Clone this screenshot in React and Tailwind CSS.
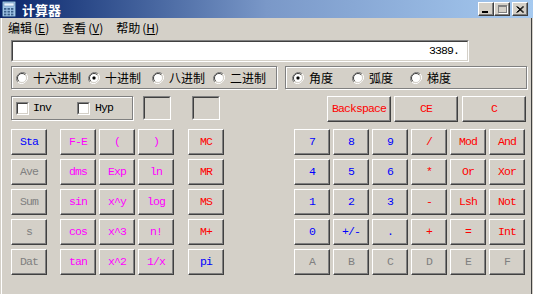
import React from "react";

const MONO = "font-['Liberation_Mono',monospace]";
const CJK = "font-['Noto_Sans_CJK_SC','Noto_Sans',sans-serif]";

const BLUE = "text-[#0000ff]";
const MAG = "text-[#ff00ff]";
const RED = "text-[#ff0000]";
const GRAY = "text-[#808080]";

const raised =
  "bg-[#d4d0c8] border border-t-white border-l-white border-r-[#404040] border-b-[#404040] shadow-[inset_-1px_-1px_0_#808080]";

function Btn({ label, color, w = "w-[36px]" }) {
  return (
    <div
      className={`${raised} ${w} h-[26px] shrink-0 flex items-center justify-center text-[11.5px] tracking-[-0.9px] leading-none ${MONO} ${color}`}
    >
      {label}
    </div>
  );
}

function Sunken({ className = "", inner = "bg-white", children }) {
  return (
    <div
      className={`border border-t-[#808080] border-l-[#808080] border-r-white border-b-white ${className}`}
    >
      <div
        className={`w-full h-full border border-t-[#404040] border-l-[#404040] border-r-[#d4d0c8] border-b-[#d4d0c8] ${inner}`}
      >
        {children}
      </div>
    </div>
  );
}

function Radio({ checked }) {
  return (
    <svg width="12" height="12" viewBox="0 0 12 12" className="shrink-0">
      <path d="M10.2 1.8 A6 6 0 0 0 1.8 10.2" fill="none" stroke="#808080" strokeWidth="1" />
      <path d="M1.8 10.2 A6 6 0 0 0 10.2 1.8" fill="none" stroke="#ffffff" strokeWidth="1" />
      <circle cx="6" cy="6" r="4.5" fill="#ffffff" />
      <path d="M9.2 2.8 A4.5 4.5 0 0 0 2.8 9.2" fill="none" stroke="#404040" strokeWidth="1" />
      <path d="M2.8 9.2 A4.5 4.5 0 0 0 9.2 2.8" fill="none" stroke="#d4d0c8" strokeWidth="1" />
      {checked && <rect x="4.5" y="4.5" width="3" height="3" rx="1" fill="#000" />}
    </svg>
  );
}

function RadioItem({ label, checked, w }) {
  return (
    <div className={`flex items-center gap-[5px] ${w}`}>
      <Radio checked={checked} />
      <span className={`text-[12px] leading-none text-black ${CJK}`}>{label}</span>
    </div>
  );
}

const etched =
  "border border-[#808080] shadow-[1px_1px_0_#ffffff,inset_1px_1px_0_#ffffff]";

function TitleIcon() {
  return (
    <svg width="14" height="16" viewBox="0 0 14 16">
      <rect x="0.5" y="0.5" width="13" height="15" rx="1" fill="#9fc3e6" stroke="#4a6f9a" />
      <rect x="2" y="2" width="10" height="3" fill="#e8f4ff" stroke="#5d7fa8" strokeWidth="0.5" />
      {[0, 1, 2].map((r) =>
        [0, 1, 2].map((c) => (
          <rect key={`${r}-${c}`} x={2 + c * 3.5} y={7 + r * 2.8} width="2.4" height="1.8" fill="#3a5f8a" />
        ))
      )}
    </svg>
  );
}

function TitleBtn({ children, className = "" }) {
  return (
    <div
      className={`w-[16px] h-[14px] ${raised} flex items-center justify-center ${className}`}
    >
      {children}
    </div>
  );
}

function Menu({ label, k }) {
  return (
    <span className={`text-[12px] leading-none text-black ${CJK}`}>
      {label}
      <span className="ml-[2px]">
        (<span className="underline">{k}</span>)
      </span>
    </span>
  );
}

export default function App() {
  const col1 = [
    ["Sta", BLUE],
    ["Ave", GRAY],
    ["Sum", GRAY],
    ["s", GRAY],
    ["Dat", GRAY],
  ];
  const mid = [
    [["F-E", MAG], ["(", MAG], [")", MAG]],
    [["dms", MAG], ["Exp", MAG], ["ln", MAG]],
    [["sin", MAG], ["x^y", MAG], ["log", MAG]],
    [["cos", MAG], ["x^3", MAG], ["n!", MAG]],
    [["tan", MAG], ["x^2", MAG], ["1/x", MAG]],
  ];
  const mem = [
    ["MC", RED],
    ["MR", RED],
    ["MS", RED],
    ["M+", RED],
    ["pi", BLUE],
  ];
  const right = [
    [["7", BLUE], ["8", BLUE], ["9", BLUE], ["/", RED], ["Mod", RED], ["And", RED]],
    [["4", BLUE], ["5", BLUE], ["6", BLUE], ["*", RED], ["Or", RED], ["Xor", RED]],
    [["1", BLUE], ["2", BLUE], ["3", BLUE], ["-", RED], ["Lsh", RED], ["Not", RED]],
    [["0", BLUE], ["+/-", BLUE], [".", BLUE], ["+", RED], ["=", RED], ["Int", RED]],
    [["A", GRAY], ["B", GRAY], ["C", GRAY], ["D", GRAY], ["E", GRAY], ["F", GRAY]],
  ];

  return (
    <div className="w-[533px] h-[294px] bg-[#d4d0c8] overflow-hidden flex flex-col">
      {/* title bar */}
      <div className="h-[18px] shrink-0 flex items-center bg-linear-to-r from-[#0a246a] via-[#7a98c8] to-[#a6caf0]">
        <div className="ml-[2px] flex items-center">
          <TitleIcon />
        </div>
        <span className={`ml-[6px] text-[13px] font-bold text-white leading-none ${CJK}`}>计算器</span>
        <div className="ml-auto mr-[5px] flex items-center">
          <TitleBtn>
            <div className="w-[6px] h-[2px] bg-black mt-[6px] mr-[2px]" />
          </TitleBtn>
          <TitleBtn>
            <div className="w-[9px] h-[8px] border border-[#808080] border-t-2 shadow-[1px_1px_0_#ffffff]" />
          </TitleBtn>
          <TitleBtn className="ml-[2px]">
            <svg width="8" height="7" viewBox="0 0 8 7">
              <path d="M0.5 0.5 L7 6.5 M1.5 0.5 L8 6.5 M7 0.5 L0.5 6.5 M8 0.5 L1.5 6.5" stroke="#000" strokeWidth="1" />
            </svg>
          </TitleBtn>
        </div>
      </div>

      <div className="flex-1 flex flex-col ml-[1px] mr-[1px] border-l border-white border-r border-r-[#404040]">
        {/* menu */}
        <div className="h-[19px] shrink-0 flex items-center pl-[6px] gap-[13px]">
          <Menu label="编辑" k="E" />
          <Menu label="查看" k="V" />
          <Menu label="帮助" k="H" />
        </div>

        {/* display */}
        <div className="pl-[9px] mt-[3px]">
          <Sunken className="w-[458px] h-[22px]">
            <div className={`h-full flex items-center justify-end pr-[8px] text-[11.5px] tracking-[-0.9px] leading-none text-black ${MONO}`}>
              3389.
            </div>
          </Sunken>
        </div>

        {/* radio groups */}
        <div className="pl-[9px] mt-[4px] flex items-start">
          <div className={`w-[266px] h-[23px] ${etched} flex items-center pl-[4px]`}>
            <RadioItem label="十六进制" checked={false} w="w-[72px]" />
            <RadioItem label="十进制" checked={true} w="w-[64px]" />
            <RadioItem label="八进制" checked={false} w="w-[61px]" />
            <RadioItem label="二进制" checked={false} w="w-[60px]" />
          </div>
          <div className={`ml-[8px] w-[242px] h-[23px] ${etched} flex items-center pl-[6px]`}>
            <RadioItem label="角度" checked={true} w="w-[60px]" />
            <RadioItem label="弧度" checked={false} w="w-[58px]" />
            <RadioItem label="梯度" checked={false} w="w-[58px]" />
          </div>
        </div>

        {/* inv / hyp row */}
        <div className="pl-[9px] mt-[7px] flex items-start">
          <div className={`w-[122px] h-[24px] ${etched} flex items-center pl-[4px]`}>
            <div className="flex items-center gap-[4px] w-[61px]">
              <Sunken className="w-[13px] h-[13px]" />
              <span className={`text-[11.5px] tracking-[-0.9px] leading-none text-black ${MONO}`}>Inv</span>
            </div>
            <div className="flex items-center gap-[5px]">
              <Sunken className="w-[13px] h-[13px]" />
              <span className={`text-[11.5px] tracking-[-0.9px] leading-none text-black ${MONO}`}>Hyp</span>
            </div>
          </div>
          <Sunken className="ml-[10px] w-[28px] h-[24px]" inner="bg-[#d4d0c8]" />
          <Sunken className="ml-[21px] w-[28px] h-[24px]" inner="bg-[#d4d0c8]" />
          <div className="ml-[107px] flex">
            <Btn label="Backspace" color={RED} w="w-[64px]" />
            <Btn label="CE" color={RED} w="w-[64px] ml-[3px]" />
            <Btn label="C" color={RED} w="w-[64px] ml-[4px]" />
          </div>
        </div>

        {/* main keys */}
        <div className="pl-[9px] mt-[7px] flex items-start">
          <div className="flex flex-col gap-[4px]">
            {col1.map(([l, c]) => (
              <Btn key={l} label={l} color={c} />
            ))}
          </div>
          <div className="ml-[13px] flex flex-col gap-[4px]">
            {mid.map((row, i) => (
              <div key={i} className="flex gap-[3px]">
                {row.map(([l, c]) => (
                  <Btn key={l} label={l} color={c} />
                ))}
              </div>
            ))}
          </div>
          <div className="ml-[14px] flex flex-col gap-[4px]">
            {mem.map(([l, c]) => (
              <Btn key={l} label={l} color={c} />
            ))}
          </div>
          <div className="ml-[70px] flex flex-col gap-[4px]">
            {right.map((row, i) => (
              <div key={i} className="flex gap-[3px]">
                {row.map(([l, c]) => (
                  <Btn key={l} label={l} color={c} />
                ))}
              </div>
            ))}
          </div>
        </div>
      </div>
    </div>
  );
}
